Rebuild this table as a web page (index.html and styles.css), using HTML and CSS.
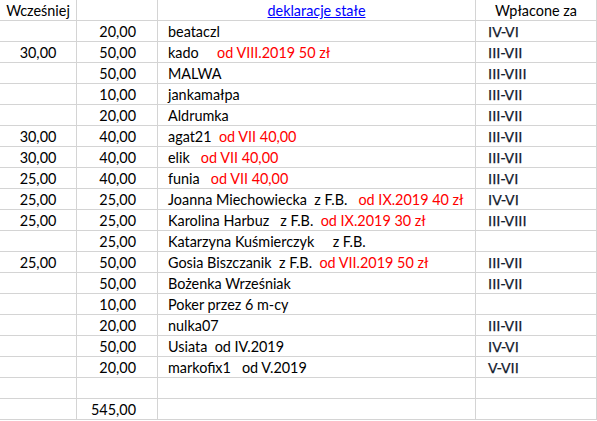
FILE: index.html
```html
<!DOCTYPE html>
<html lang="pl">
<head>
<meta charset="utf-8">
<title>deklaracje stałe</title>
<link rel="stylesheet" href="styles.css">
</head>
<body>
<div class="sheet">
  <div class="c c1 hd">Wcześniej</div><div class="c c2"></div><div class="c c3 center"><span class="link">deklaracje stałe</span></div><div class="c c4 hd">Wpłacone za</div>

  <div class="c c1"></div><div class="c c2">20,00</div><div class="c c3">beataczl</div><div class="c c4 rm">IV-VI</div>
  <div class="c c1">30,00</div><div class="c c2">50,00</div><div class="c c3">kado     <span class="red">od VIII.2019 50 zł</span></div><div class="c c4 rm">III-VII</div>
  <div class="c c1"></div><div class="c c2">50,00</div><div class="c c3">MALWA</div><div class="c c4 rm">III-VIII</div>
  <div class="c c1"></div><div class="c c2">10,00</div><div class="c c3">jankamałpa</div><div class="c c4 rm">III-VII</div>
  <div class="c c1"></div><div class="c c2">20,00</div><div class="c c3">Aldrumka</div><div class="c c4 rm">III-VII</div>
  <div class="c c1">30,00</div><div class="c c2">40,00</div><div class="c c3">agat21  <span class="red">od VII 40,00</span></div><div class="c c4 rm">III-VII</div>
  <div class="c c1">30,00</div><div class="c c2">40,00</div><div class="c c3">elik   <span class="red">od VII 40,00</span></div><div class="c c4 rm">III-VII</div>
  <div class="c c1">25,00</div><div class="c c2">40,00</div><div class="c c3">funia   <span class="red">od VII 40,00</span></div><div class="c c4 rm">III-VI</div>
  <div class="c c1">25,00</div><div class="c c2">25,00</div><div class="c c3">Joanna Miechowiecka  z F.B.   <span class="red">od IX.2019 40 zł</span></div><div class="c c4 rm">IV-VI</div>
  <div class="c c1">25,00</div><div class="c c2">25,00</div><div class="c c3">Karolina Harbuz   z F.B.  <span class="red">od IX.2019 30 zł</span></div><div class="c c4 rm">III-VIII</div>
  <div class="c c1"></div><div class="c c2">25,00</div><div class="c c3">Katarzyna Kuśmierczyk     z F.B.</div><div class="c c4 rm"></div>
  <div class="c c1">25,00</div><div class="c c2">50,00</div><div class="c c3">Gosia Biszczanik  z F.B.  <span class="red">od VII.2019 50 zł</span></div><div class="c c4 rm">III-VII</div>
  <div class="c c1"></div><div class="c c2">50,00</div><div class="c c3">Bożenka Wrześniak</div><div class="c c4 rm">III-VII</div>
  <div class="c c1"></div><div class="c c2">10,00</div><div class="c c3">Poker przez 6 m-cy</div><div class="c c4 rm"></div>
  <div class="c c1"></div><div class="c c2">20,00</div><div class="c c3">nulka07</div><div class="c c4 rm">III-VII</div>
  <div class="c c1"></div><div class="c c2">50,00</div><div class="c c3">Usiata  od IV.2019</div><div class="c c4 rm">IV-VI</div>
  <div class="c c1"></div><div class="c c2">20,00</div><div class="c c3">markofix1   od V.2019</div><div class="c c4 rm">V-VII</div>
  <div class="c c1"></div><div class="c c2"></div><div class="c c3"></div><div class="c c4"></div>
  <div class="c c1"></div><div class="c c2">545,00</div><div class="c c3"></div><div class="c c4"></div>
</div>
</body>
</html>
```

FILE: styles.css
```css
html, body {
  margin: 0;
  padding: 0;
  background: #ffffff;
}

.sheet {
  display: grid;
  grid-template-columns: 77px 81px 318px 121px;
  grid-auto-rows: 21px;
  width: 597px;
  font-family: Lato, "Noto Sans", sans-serif;
  font-size: 14.4px;
  color: #000;
}

.c {
  box-sizing: border-box;
  border-right: 1px solid #d4d4d4;
  border-bottom: 1px solid #d4d4d4;
  height: 21px;
  line-height: 20px;
  padding-top: 1px;
  white-space: pre;
  overflow: visible;
}

.c1 {
  text-align: center;
}

.c2 {
  text-align: right;
  padding-right: 21px;
}

.c3 {
  padding-left: 10px;
}

.c3.center {
  padding-left: 0;
  text-align: center;
}

.c4 {
  padding-left: 12px;
}

.c4.hd {
  padding-left: 0;
  text-align: center;
}

.rm {
  font-family: "DejaVu Sans", Verdana, sans-serif;
  font-size: 14px;
  color: #14202e;
  -webkit-text-stroke: 0.25px #14202e;
}

.link {
  color: #0000ff;
  text-decoration: underline;
}

.red {
  color: #ff0000;
}
```
